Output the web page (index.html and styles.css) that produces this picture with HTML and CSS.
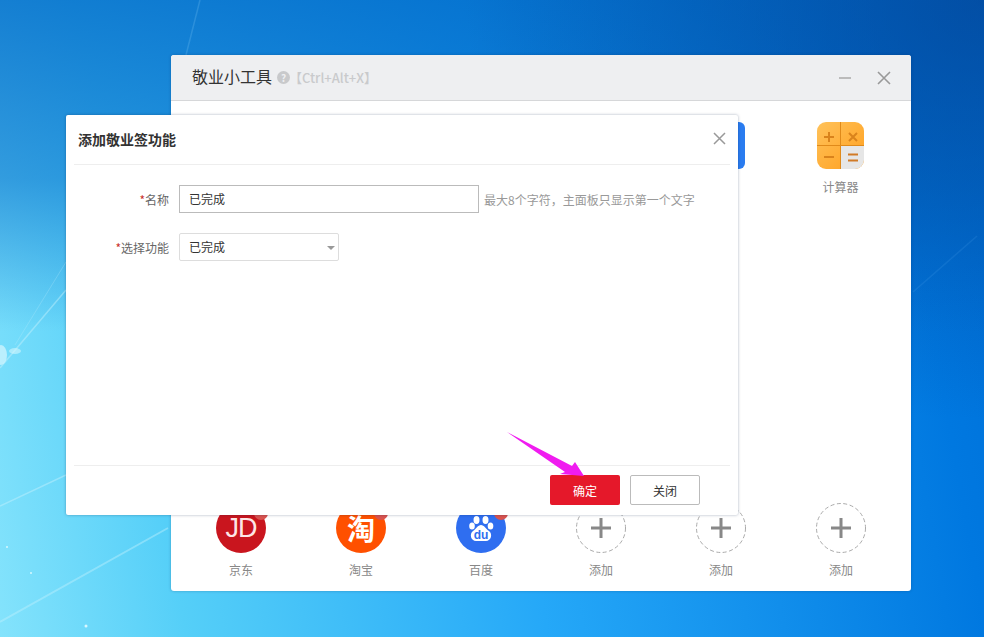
FILE: index.html
```html
<!DOCTYPE html>
<html lang="zh-CN">

<head>
    <meta charset="UTF-8">
    <title>敬业小工具</title>
    <link rel="stylesheet" href="styles.css">
</head>

<body>
    <div id="desktop">
        <svg class="streaks" width="984" height="637" viewBox="0 0 984 637">
            <path d="M0 506 L66 475" stroke="#bdf0fd" stroke-width="1.5" opacity=".5" fill="none" />
            <path d="M0 622 L168 528" stroke="#bdf0fd" stroke-width="2" opacity=".45" fill="none" />
            <path d="M0 368 L66 290" stroke="#c5f1fd" stroke-width="1.5" opacity=".45" fill="none" />
            <path d="M15 345 L66 262" stroke="#c5f1fd" stroke-width="1" opacity=".25" fill="none" />
            <path d="M186 55 L200 0" stroke="#6ab8ee" stroke-width="1.5" opacity=".3" fill="none" />
            <path d="M913 292 L977 236" stroke="#5cb0f0" stroke-width="1.5" opacity=".15" fill="none" />
            <ellipse cx="1" cy="355" rx="6" ry="10" fill="#d8f7fe" opacity=".7" />
            <ellipse cx="15" cy="351" rx="6" ry="3" fill="#d8f7fe" opacity=".55" />
            <circle cx="7" cy="547" r="1" fill="#d8f7fe" />
            <circle cx="31" cy="573" r="1" fill="#d8f7fe" />
            <circle cx="86" cy="626" r="1.5" fill="#d8f7fe" />
        </svg>

        <!-- 主窗口 -->
        <div id="tool-win">
            <div class="win-head">
                <span class="win-title">敬业小工具</span>
                <span class="help">?</span>
                <span class="keys">【Ctrl+Alt+X】</span>
                <span class="win-min"></span>
                <svg class="win-close" width="14" height="14" viewBox="0 0 14 14">
                    <path d="M1 1 L13 13 M13 1 L1 13" stroke="#999" stroke-width="1.6" fill="none" />
                </svg>
            </div>
            <div class="win-body">
                <div class="tool-row">
                    <div class="tool tool-blue">
                        <div class="blue-icon"></div>
                    </div>
                    <div class="tool tool-calc">
                        <svg width="47" height="47" viewBox="0 0 47 47">
                            <defs>
                                <linearGradient id="calc-bg" x1="0" y1="0" x2="1" y2="1">
                                    <stop offset="0" stop-color="#ffc25a" />
                                    <stop offset="1" stop-color="#ff9f1e" />
                                </linearGradient>
                                <clipPath id="calc-clip">
                                    <rect width="47" height="47" rx="9" />
                                </clipPath>
                            </defs>
                            <g clip-path="url(#calc-clip)">
                                <rect width="47" height="47" fill="url(#calc-bg)" />
                                <rect x="24" y="24" width="23" height="23" fill="#e6e6e6" />
                                <path d="M23.5 0 V47 M0 23.5 H47" stroke="#e08a1a" stroke-width="1" fill="none" />
                                <path d="M7 15 H17 M12 10 V20" stroke="#d9831c" stroke-width="2" fill="none" />
                                <path d="M32 11 L40 19 M40 11 L32 19" stroke="#d9831c" stroke-width="2" fill="none" />
                                <path d="M7 35 H17" stroke="#d9831c" stroke-width="2" fill="none" />
                                <path d="M31 32.5 H41 M31 38.5 H41" stroke="#d17a26" stroke-width="2" fill="none" />
                            </g>
                        </svg>
                        <span class="tool-name">计算器</span>
                    </div>
                </div>
                <div class="link-row">
                    <div class="link">
                        <div class="round jd">JD<i class="dot"></i></div>
                        <span class="tool-name">京东</span>
                    </div>
                    <div class="link">
                        <div class="round taobao">淘<i class="dot"></i></div>
                        <span class="tool-name">淘宝</span>
                    </div>
                    <div class="link">
                        <div class="round baidu">
                            <svg width="36" height="36" viewBox="0 0 36 36">
                                <ellipse cx="9" cy="16" rx="2.8" ry="3.6" fill="#fff" />
                                <ellipse cx="13.5" cy="10" rx="3" ry="4" fill="#fff" />
                                <ellipse cx="22.5" cy="10" rx="3" ry="4" fill="#fff" />
                                <ellipse cx="27.5" cy="16" rx="2.8" ry="3.6" fill="#fff" />
                                <path d="M18 15 C21 15 23 19 26 21 C30 24 28 31 23 31 H13 C8 31 6 24 10 21 C13 19 15 15 18 15 Z" fill="#fff" />
                                <text x="18" y="29" class="du">du</text>
                            </svg>
                            <i class="dot"></i>
                        </div>
                        <span class="tool-name">百度</span>
                    </div>
                    <div class="link">
                        <div class="round">
                            <svg width="50" height="50" viewBox="0 0 50 50">
                                <circle class="add-ring" cx="25" cy="25" r="24.5" />
                                <path class="add-plus" d="M15 25 H35 M25 15 V35" />
                            </svg>
                        </div>
                        <span class="tool-name">添加</span>
                    </div>
                    <div class="link">
                        <div class="round">
                            <svg width="50" height="50" viewBox="0 0 50 50">
                                <circle class="add-ring" cx="25" cy="25" r="24.5" />
                                <path class="add-plus" d="M15 25 H35 M25 15 V35" />
                            </svg>
                        </div>
                        <span class="tool-name">添加</span>
                    </div>
                    <div class="link">
                        <div class="round">
                            <svg width="50" height="50" viewBox="0 0 50 50">
                                <circle class="add-ring" cx="25" cy="25" r="24.5" />
                                <path class="add-plus" d="M15 25 H35 M25 15 V35" />
                            </svg>
                        </div>
                        <span class="tool-name">添加</span>
                    </div>
                </div>
            </div>
        </div>

        <!-- 添加功能弹窗 -->
        <div id="add-dialog">
            <div class="dlg-head">
                <span class="dlg-title">添加敬业签功能</span>
                <svg width="13" height="13" viewBox="0 0 13 13">
                    <path d="M1 1 L12 12 M12 1 L1 12" stroke="#999" stroke-width="1.5" fill="none" />
                </svg>
            </div>
            <div class="dlg-body">
                <div class="form-row">
                    <label class="form-label"><em>*</em>名称</label>
                    <div class="input">已完成</div>
                    <span class="hint">最大8个字符，主面板只显示第一个文字</span>
                </div>
                <div class="form-row">
                    <label class="form-label"><em>*</em>选择功能</label>
                    <div class="select">已完成<i class="caret"></i></div>
                </div>
            </div>
            <div class="dlg-foot">
                <button class="btn btn-ok">确定</button>
                <button class="btn btn-close">关闭</button>
            </div>
        </div>

        <svg class="arrow" width="90" height="55" viewBox="0 0 90 55">
            <polygon points="0,0 65,34 68,30 77,44 53,42 58,40" fill="#f01cf0" />
        </svg>
    </div>
</body>

</html>
```

FILE: styles.css
```css
* {
    margin: 0;
    padding: 0;
    box-sizing: border-box;
}

body {
    font-family: "Noto Sans CJK SC", "Liberation Sans", sans-serif;
    font-size: 12px;
    color: #333;
}

#desktop {
    width: 984px;
    height: 637px;
    position: relative;
    overflow: hidden;
    background:
        radial-gradient(ellipse 520px 420px at 984px 0, rgba(4, 60, 140, 0.6) 0%, rgba(4, 60, 140, 0) 100%),
        linear-gradient(180deg, rgba(0, 105, 200, 0.8) 0%, rgba(0, 105, 200, 0.55) 28%, rgba(0, 105, 200, 0) 52%),
        linear-gradient(80deg, #84e3fc 0%, #55cff8 17%, #25a8f8 50%, #0078e0 90%, #0070d8 100%);
}

.streaks {
    position: absolute;
    left: 0;
    top: 0;
}

#tool-win {
    position: absolute;
    left: 171px;
    top: 55px;
    width: 740px;
    height: 536px;
    display: flex;
    flex-direction: column;
    background: #fff;
    border-radius: 3px;
    box-shadow: 0 0 3px rgba(0, 40, 90, 0.3);
}

.win-head {
    height: 46px;
    display: flex;
    align-items: center;
    padding: 0 20px 0 21px;
    background: #eeeff1;
    border-bottom: 1px solid #d6d7d9;
    border-radius: 3px 3px 0 0;
}

.win-title {
    margin-top: -3px;
    font-size: 16px;
    color: #333;
}

.help {
    width: 13px;
    height: 13px;
    margin-left: 5px;
    border-radius: 50%;
    background: #c8c9cb;
    color: #eeeff1;
    font-size: 10px;
    font-weight: 700;
    line-height: 13px;
    text-align: center;
}

.keys {
    margin-left: -1px;
    color: #c9cacc;
    font-size: 13px;
    font-weight: 500;
}

.win-min {
    width: 12px;
    height: 2px;
    margin-left: auto;
    margin-right: 26px;
    background: #bbb;
}

.win-body {
    flex: 1;
    display: flex;
    flex-direction: column;
    padding: 0 10px;
}

.tool-row {
    display: grid;
    grid-template-columns: repeat(6, 120px);
    padding-top: 21px;
}

.tool {
    display: flex;
    flex-direction: column;
    align-items: center;
}

.tool-blue {
    grid-column: 5;
}

.tool-calc {
    grid-column: 6;
    padding-right: 1px;
}

.blue-icon {
    width: 47px;
    height: 47px;
    border-radius: 6px;
    background: #2a7cf0;
}

.tool-name {
    color: #888;
    font-size: 12px;
    line-height: 18px;
}

.tool-calc .tool-name {
    margin-top: 9px;
}

.link-row {
    display: grid;
    grid-template-columns: repeat(6, 120px);
    margin-top: auto;
    padding-bottom: 12px;
}

.link {
    display: flex;
    flex-direction: column;
    align-items: center;
    gap: 8px;
}

.round {
    width: 50px;
    height: 50px;
    border-radius: 50%;
    position: relative;
    display: flex;
    align-items: center;
    justify-content: center;
    color: #fff;
}

.jd {
    background: #c9151e;
    color: #fde6e6;
    font-family: "Liberation Sans", sans-serif;
    font-size: 27px;
    letter-spacing: -1px;
}

.taobao {
    background: #ff5000;
    font-size: 28px;
    font-weight: 700;
}

.baidu {
    background: #2f6ef0;
}

.du {
    font-family: "Liberation Sans", sans-serif;
    font-size: 12px;
    font-weight: 700;
    fill: #2f6ef0;
    text-anchor: middle;
}

.dot {
    position: absolute;
    right: -2px;
    top: 3px;
    width: 14px;
    height: 14px;
    border-radius: 50%;
    background: #d9534f;
}

.add-ring {
    fill: none;
    stroke: #aaa;
    stroke-width: 1;
    stroke-dasharray: 4 2.5;
}

.add-plus {
    fill: none;
    stroke: #888;
    stroke-width: 3;
}

#add-dialog {
    position: absolute;
    left: 66px;
    top: 115px;
    width: 672px;
    height: 400px;
    display: flex;
    flex-direction: column;
    padding: 0 8px;
    background: #fff;
    border-radius: 2px;
    box-shadow: 0 0 3px rgba(0, 30, 70, 0.35);
}

.dlg-head {
    height: 50px;
    display: flex;
    align-items: center;
    justify-content: space-between;
    padding: 0 4px 2px 4px;
    border-bottom: 1px solid #eee;
}

.dlg-title {
    font-size: 14px;
    font-weight: 700;
    color: #333;
}

.dlg-body {
    flex: 1;
    padding-top: 20px;
    display: flex;
    flex-direction: column;
    gap: 20px;
}

.form-row {
    display: flex;
    align-items: center;
}

.form-label {
    width: 95px;
    text-align: right;
    color: #666;
    font-size: 12px;
}

.form-label em {
    color: #c9302c;
    font-style: normal;
}

.input,
.select {
    height: 28px;
    margin-left: 10px;
    padding-left: 9px;
    line-height: 26px;
    color: #333;
    font-size: 12px;
}

.input {
    width: 300px;
    border: 1px solid #bbb;
}

.select {
    width: 160px;
    border: 1px solid #ddd;
    border-radius: 2px;
    position: relative;
}

.caret {
    position: absolute;
    right: 3px;
    top: 12px;
    border-top: 4px solid #999;
    border-left: 4px solid transparent;
    border-right: 4px solid transparent;
}

.hint {
    margin-left: 5px;
    color: #999;
    font-size: 12px;
}

.dlg-foot {
    height: 50px;
    display: flex;
    justify-content: flex-end;
    align-items: flex-start;
    gap: 10px;
    padding: 9px 30px 0 0;
    border-top: 1px solid #eee;
}

.btn {
    width: 70px;
    height: 30px;
    border-radius: 2px;
    font-family: inherit;
    font-size: 12px;
}

.btn-ok {
    border: 0;
    background: #e5182a;
    color: #fff;
}

.btn-close {
    border: 1px solid #bbb;
    background: #fff;
    color: #333;
}

.arrow {
    position: absolute;
    left: 507px;
    top: 432px;
}
```
